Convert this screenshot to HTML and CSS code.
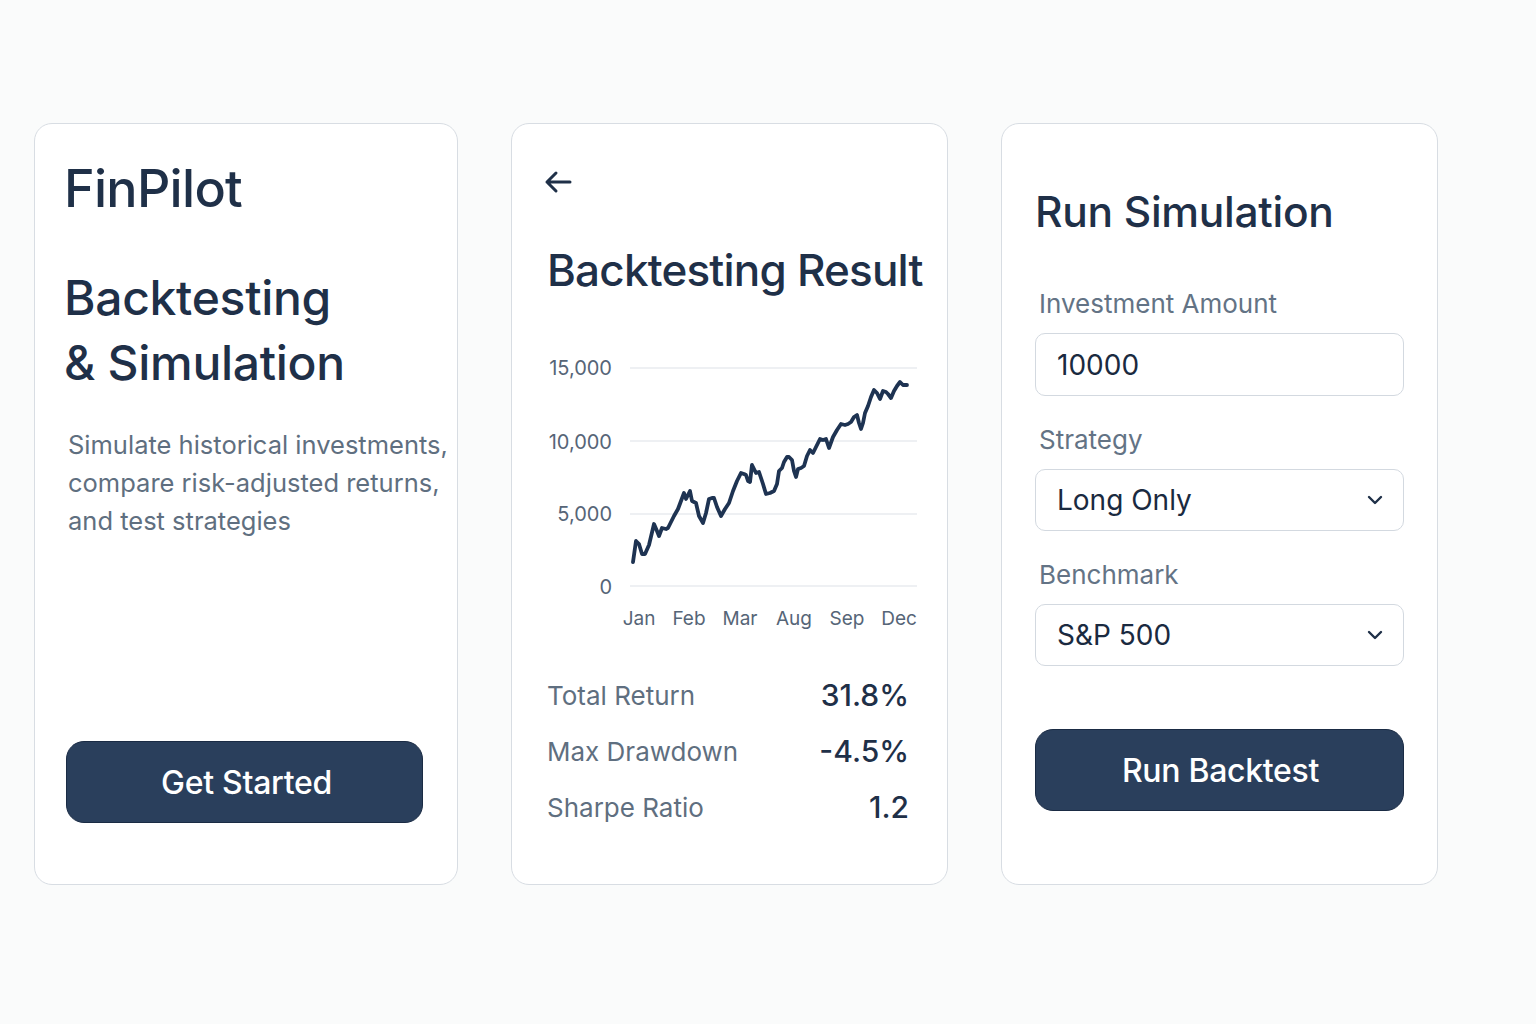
FILE: index.html
```html
<!DOCTYPE html>
<html lang="en">
<head>
<meta charset="utf-8">
<title>FinPilot</title>
<link rel="stylesheet" href="styles.css">
</head>
<body>
<main class="row">
  <section class="card card-intro">
    <h1 class="brand">FinPilot</h1>
    <h2 class="hero">Backtesting<br>&amp; Simulation</h2>
    <p class="desc">Simulate historical investments, compare risk-adjusted returns, and test strategies</p>
    <button class="btn btn-intro">Get Started</button>
  </section>

  <section class="card card-result">
    <svg class="back" width="28" height="24" viewBox="0 0 28 24" fill="none" stroke="#1f3048" stroke-width="3" stroke-linecap="round" stroke-linejoin="round"><path d="M26 12H3M12 3L3 12L12 21"/></svg>
    <h2 class="title">Backtesting Result</h2>
    <svg class="chart" width="380" height="290" viewBox="0 0 380 290">
      <g stroke="#dde2e8" stroke-width="1.2">
        <line x1="89" y1="17" x2="376" y2="17"/>
        <line x1="89" y1="90" x2="376" y2="90"/>
        <line x1="89" y1="163" x2="376" y2="163"/>
        <line x1="89" y1="235" x2="376" y2="235"/>
      </g>
      <g class="ylab" text-anchor="end">
        <text x="71" y="24">15,000</text>
        <text x="71" y="98">10,000</text>
        <text x="71" y="170">5,000</text>
        <text x="71" y="243">0</text>
      </g>
      <g class="xlab" text-anchor="middle">
        <text x="98" y="274">Jan</text>
        <text x="148" y="274">Feb</text>
        <text x="199" y="274">Mar</text>
        <text x="253" y="274">Aug</text>
        <text x="306" y="274">Sep</text>
        <text x="358" y="274">Dec</text>
      </g>
      <polyline fill="none" stroke="#1e3352" stroke-width="3.8" stroke-linejoin="round" stroke-linecap="round"
        points="92,211 95,190 98,193 101,203 104,203 108,194 113,173 116,180 118,185 121,177 125,178 127,177 129,173 133,165 137,158 140,150 143,142 145,148 147,144 149,140 151,150 155,152 158,165 162,172 165,162 168,148 171,147 173,147 176,156 180,165 184,158 188,152 192,140 196,130 200,122 203,123 205,124 207,130 209,131 211,114 213,118 215,122 218,121 222,133 225,143 229,142 233,140 236,133 238,120 241,117 243,111 246,106 248,106 251,109 253,120 255,126 257,118 260,117 263,115 266,105 269,99 272,102 275,96 277,92 279,88 282,89 285,88 288,97 292,86 296,79 300,73 304,74 307,73 310,71 313,66 316,64 318,72 320,78 322,72 324,62 327,55 330,46 333,39 336,42 339,48 342,40 345,41 347,43 350,47 353,40 356,35 359,31 362,34 366,34"/>
    </svg>
    <div class="stats">
      <div class="stat"><span class="stat-label">Total Return</span><span class="stat-val">31.8%</span></div>
      <div class="stat"><span class="stat-label">Max Drawdown</span><span class="stat-val">-4.5%</span></div>
      <div class="stat"><span class="stat-label">Sharpe Ratio</span><span class="stat-val">1.2</span></div>
    </div>
  </section>

  <section class="card card-sim">
    <h2 class="sim-title">Run Simulation</h2>
    <div class="field">
      <label class="label">Investment Amount</label>
      <div class="input">10000</div>
    </div>
    <div class="field">
      <label class="label">Strategy</label>
      <div class="input select">Long Only
        <svg class="chev" width="16" height="10" viewBox="0 0 16 10" fill="none" stroke="#1f3048" stroke-width="2.4" stroke-linecap="round" stroke-linejoin="round"><path d="M2 2L8 8L14 2"/></svg>
      </div>
    </div>
    <div class="field">
      <label class="label">Benchmark</label>
      <div class="input select">S&amp;P 500
        <svg class="chev" width="16" height="10" viewBox="0 0 16 10" fill="none" stroke="#1f3048" stroke-width="2.4" stroke-linecap="round" stroke-linejoin="round"><path d="M2 2L8 8L14 2"/></svg>
      </div>
    </div>
    <button class="btn btn-sim">Run Backtest</button>
  </section>
</main>
</body>
</html>
```

FILE: styles.css
```css
* { box-sizing: border-box; }
html, body { margin: 0; padding: 0; }
body {
  background: #fafbfb;
  font-family: Inter, "Noto Sans", "Liberation Sans", sans-serif;
  color: #1f3048;
  width: 1536px;
  height: 1024px;
  overflow: hidden;
}
.row {
  display: flex;
  align-items: flex-start;
  gap: 53px;
  padding: 123px 0 0 34px;
}
.card {
  background: #ffffff;
  border: 1.5px solid #d8dde3;
  border-radius: 18px;
  height: 762px;
  display: flex;
  flex-direction: column;
}
.card-intro { width: 424px; padding: 34px 35px 61px 29px; }
.card-result { width: 437px; padding: 46px 30px 0 31px; }
.card-sim { width: 437px; padding: 0 33px 0 33px; }

.brand {
  margin: 0;
  font-size: 52px;
  font-weight: 500;
  line-height: 62px;
  letter-spacing: -0.7px;
  color: #1f3048;
}
.hero {
  margin: 45px 0 0 0;
  font-size: 48px;
  font-weight: 500;
  line-height: 65px;
  letter-spacing: -0.3px;
  color: #1f3048;
}
.desc {
  margin: 31px 0 0 4px;
  font-size: 25.5px;
  line-height: 38px;
  color: #5f6f80;
  width: 400px;
}
.btn {
  border: 1px solid #1a2b44;
  background: #2a3f5c;
  color: #ffffff;
  font-family: Inter, "Noto Sans", sans-serif;
  font-size: 32px;
  font-weight: 500;
  letter-spacing: -0.3px;
  height: 82px;
  border-radius: 18px;
  cursor: pointer;
}
.btn-intro { margin-top: auto; margin-left: 2px; width: 357px; padding-left: 10px; }

.back { display: block; margin-left: 1px; }
.title {
  margin: 46px 0 0 4px;
  font-size: 44px;
  font-weight: 500;
  line-height: 60px;
  letter-spacing: -0.8px;
  white-space: nowrap;
  color: #1f3048;
}
.chart { display: block; margin: 51px 0 0 -2px; overflow: visible; }
.ylab text { font-family: Inter, "Noto Sans", sans-serif; font-size: 20px; fill: #566577; }
.xlab text { font-family: Inter, "Noto Sans", sans-serif; font-size: 19px; fill: #566577; }
.stats { margin-top: 34px; display: flex; flex-direction: column; gap: 16px; padding: 0 8px 0 4px; }
.stat { display: flex; justify-content: space-between; align-items: center; height: 40px; }
.stat-label { font-size: 26px; color: #5f6f80; }
.stat-val { font-size: 30px; font-weight: 500; color: #1f3048; }

.sim-title {
  margin: 60px 0 0 0;
  font-size: 42.5px;
  font-weight: 500;
  line-height: 56px;
  letter-spacing: -0.3px;
  color: #1f3048;
}
.field { display: flex; flex-direction: column; }
.field:nth-of-type(1) { margin-top: 48px; }
.field + .field { margin-top: 28px; }
.label { font-size: 26px; line-height: 32px; color: #637385; padding-left: 4px; }
.input {
  margin-top: 13px;
  height: 63px;
  border: 1.5px solid #d3d9e0;
  border-radius: 10px;
  display: flex;
  align-items: center;
  justify-content: space-between;
  padding: 0 20px 0 21px;
  font-size: 28px;
  color: #1a2a40;
}
.select { height: 62px; }
.btn-sim { margin-top: 63px; width: 369px; padding-left: 8px; }
```
